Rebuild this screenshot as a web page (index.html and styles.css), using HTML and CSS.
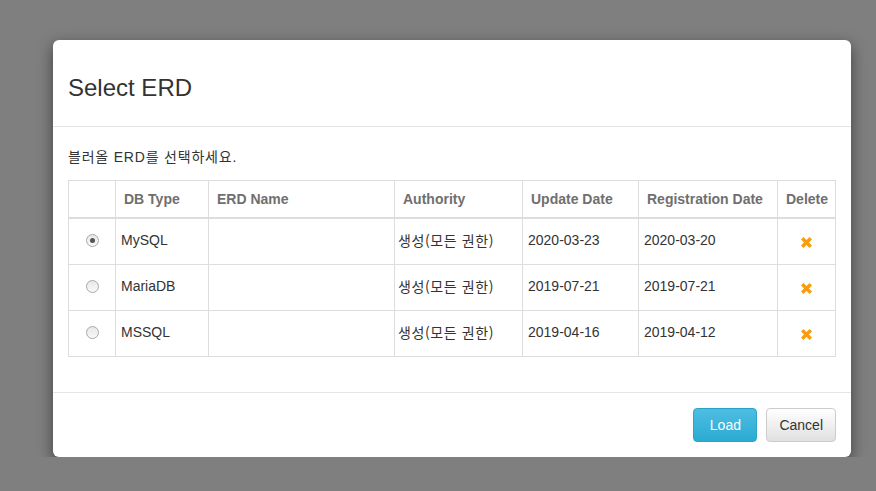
FILE: index.html
```html
<!DOCTYPE html>
<html lang="ko">
<head>
    <meta charset="UTF-8">
    <title>Select ERD</title>
    <link rel="stylesheet" href="styles.css">
</head>
<body>
    <div class="modal">
        <div class="modal-header">
            <h4 class="modal-title">Select ERD</h4>
        </div>
        <div class="modal-body">
            <p>블러올 ERD를 선택하세요.</p>
            <table class="erd-table">
                <colgroup>
                    <col style="width: 47px">
                    <col style="width: 93px">
                    <col style="width: 186px">
                    <col style="width: 128px">
                    <col style="width: 116px">
                    <col style="width: 139px">
                    <col style="width: 58px">
                </colgroup>
                <thead>
                    <tr>
                        <th></th>
                        <th>DB Type</th>
                        <th>ERD Name</th>
                        <th>Authority</th>
                        <th>Update Date</th>
                        <th>Registration Date</th>
                        <th class="center">Delete</th>
                    </tr>
                </thead>
                <tbody>
                    <tr>
                        <td class="center"><span class="radio checked"></span></td>
                        <td>MySQL</td>
                        <td></td>
                        <td class="auth">생성(모든 권한)</td>
                        <td>2020-03-23</td>
                        <td>2020-03-20</td>
                        <td class="center"><svg class="remove" viewBox="0 0 13 13"><path d="M2.2 2.2 L10.8 10.8 M10.8 2.2 L2.2 10.8"/></svg></td>
                    </tr>
                    <tr>
                        <td class="center"><span class="radio"></span></td>
                        <td>MariaDB</td>
                        <td></td>
                        <td class="auth">생성(모든 권한)</td>
                        <td>2019-07-21</td>
                        <td>2019-07-21</td>
                        <td class="center"><svg class="remove" viewBox="0 0 13 13"><path d="M2.2 2.2 L10.8 10.8 M10.8 2.2 L2.2 10.8"/></svg></td>
                    </tr>
                    <tr>
                        <td class="center"><span class="radio"></span></td>
                        <td>MSSQL</td>
                        <td></td>
                        <td class="auth">생성(모든 권한)</td>
                        <td>2019-04-16</td>
                        <td>2019-04-12</td>
                        <td class="center"><svg class="remove" viewBox="0 0 13 13"><path d="M2.2 2.2 L10.8 10.8 M10.8 2.2 L2.2 10.8"/></svg></td>
                    </tr>
                </tbody>
            </table>
        </div>
        <div class="modal-footer">
            <button class="btn btn-info">Load</button>
            <button class="btn btn-default">Cancel</button>
        </div>
    </div>
</body>
</html>
```

FILE: styles.css
```css
body {
    font-family: 'Liberation Sans', Arial, 'Noto Sans CJK KR', sans-serif;
    font-size: 14px;
    line-height: 20px;
    color: #333;
    background: #7f7f7f;
    margin: 0;
    padding: 40px 0 0 53px;
}
.modal {
    width: 798px;
    background: #fff;
    border-radius: 6px;
    box-shadow: 0 5px 15px rgba(0, 0, 0, 0.5);
}
.modal-header {
    padding: 35px 15px 25px;
    border-bottom: 1px solid #e5e5e5;
}
.modal-title {
    margin: 0;
    font-size: 24px;
    font-weight: normal;
    line-height: 26px;
    color: #333;
}
.modal-body {
    padding: 20px 15px 15px;
}
.modal-body p {
    margin: 0 0 13px;
    font-size: 14px;
    letter-spacing: 0.8px;
}
.erd-table {
    width: 768px;
    table-layout: fixed;
    border-collapse: collapse;
    margin-bottom: 20px;
}
.erd-table th, .erd-table td {
    border: 1px solid #ddd;
    text-align: left;
    vertical-align: middle;
}
.erd-table th {
    padding: 8px;
    color: #6f6f6f;
    font-weight: bold;
    border-bottom-width: 2px;
}
.erd-table td {
    padding: 11px 5px 14px;
}
.erd-table td.auth {
    font-family: 'Noto Sans CJK KR', 'Liberation Sans', sans-serif;
    font-size: 14px;
    letter-spacing: 0.6px;
    padding-left: 3px;
}
.erd-table .center {
    text-align: center;
}
.radio {
    display: inline-block;
    width: 11px;
    height: 11px;
    border: 1px solid #a9a9a9;
    border-radius: 50%;
    background: linear-gradient(#e8e8e8, #f8f8f8);
    vertical-align: middle;
    position: relative;
    top: -1px;
}
.radio.checked::after {
    content: "";
    position: absolute;
    left: 3px;
    top: 3px;
    width: 5px;
    height: 5px;
    border-radius: 50%;
    background: #555;
}
.remove {
    width: 13px;
    height: 13px;
    vertical-align: middle;
    position: relative;
    top: 1px;
    fill: none;
    stroke: #f89d0e;
    stroke-width: 3.4;
}
.modal-footer {
    border-top: 1px solid #e5e5e5;
    padding: 15px;
    display: flex;
    justify-content: flex-end;
    gap: 9px;
}
.btn {
    font-family: 'Liberation Sans', Arial, sans-serif;
    font-size: 14px;
    line-height: 20px;
    height: 34px;
    padding: 6px 12px;
    border-radius: 4px;
    border: 1px solid;
    cursor: pointer;
}
.btn-info {
    min-width: 64px;
    color: #fff;
    background: linear-gradient(#4fbde2, #2aabd2);
    border-color: #28a4c9;
}
.btn-default {
    min-width: 69px;
    color: #333;
    background: linear-gradient(#fff, #e0e0e0);
    border-color: #ccc;
}
```
